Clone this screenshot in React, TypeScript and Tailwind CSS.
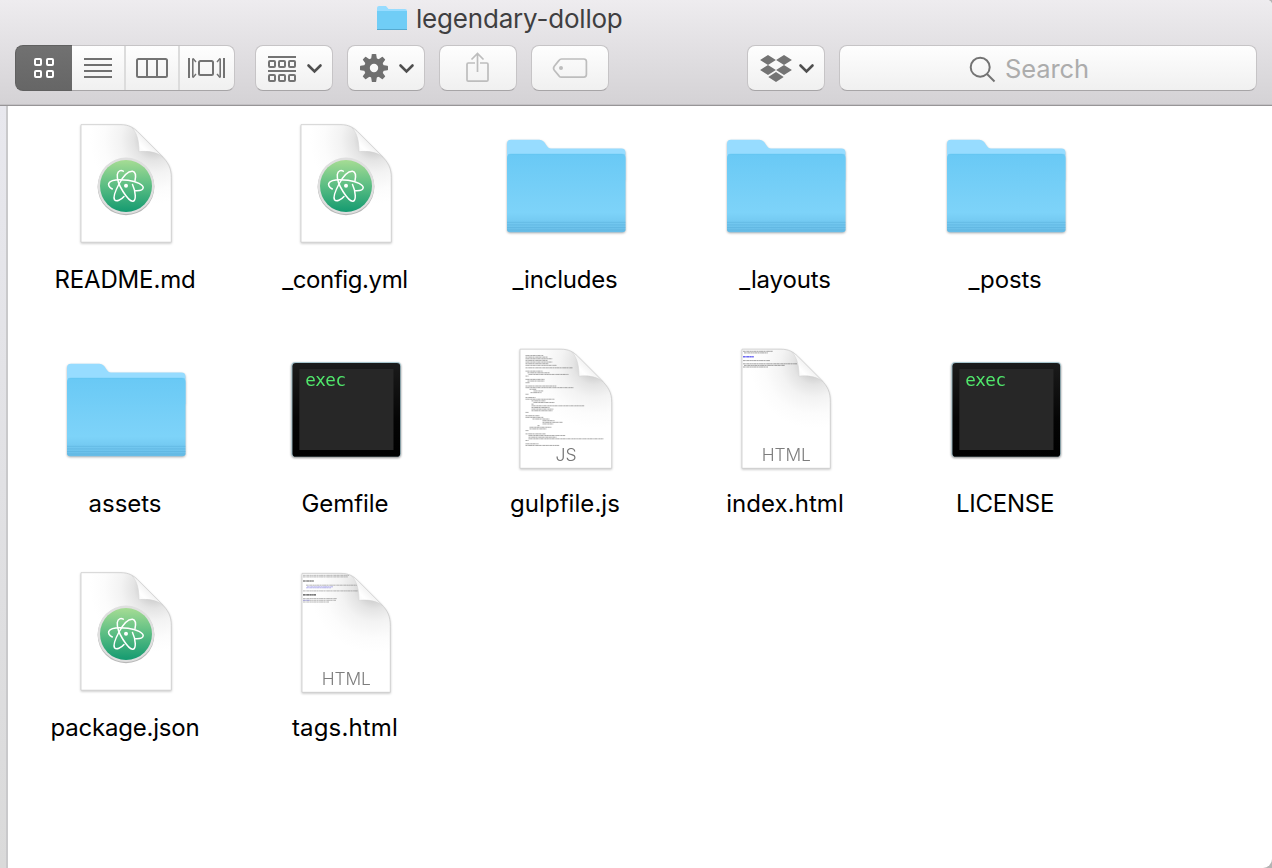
import React, { useId } from "react";

type Kind = "atom" | "folder" | "exec" | "js" | "html" | "tags";

interface FileItem {
  name: string;
  kind: Kind;
  label: string;
}

const files: FileItem[] = [
  { name: "README.md", kind: "atom", label: "tracking-[-0.15px]" },
  { name: "_config.yml", kind: "atom", label: "tracking-[-0.4px]" },
  { name: "_includes", kind: "folder", label: "tracking-[-0.2px]" },
  { name: "_layouts", kind: "folder", label: "tracking-[-0.15px]" },
  { name: "_posts", kind: "folder", label: "tracking-[-0.1px]" },
  { name: "assets", kind: "folder", label: "tracking-[-0.05px]" },
  { name: "Gemfile", kind: "exec", label: "tracking-[-0.05px]" },
  { name: "gulpfile.js", kind: "js", label: "tracking-[0.05px]" },
  { name: "index.html", kind: "html", label: "tracking-[0.05px]" },
  { name: "LICENSE", kind: "exec", label: "tracking-[-0.25px]" },
  { name: "package.json", kind: "atom", label: "tracking-[-0.2px]" },
  { name: "tags.html", kind: "tags", label: "tracking-[0.15px]" },
];

function FolderIcon() {
  const id = useId();
  return (
    <svg width="128" height="128" viewBox="0 0 128 128" className="drop-shadow-[0_1px_1px_rgba(0,0,0,0.3)]">
      <defs>
        <linearGradient id={id} x1="0" y1="0" x2="0" y2="1">
          <stop offset="0" stopColor="#69c9f5" />
          <stop offset="0.6" stopColor="#7ad1f8" />
          <stop offset="0.75" stopColor="#7dd3f9" />
          <stop offset="0.87" stopColor="#73c9f1" />
          <stop offset="1" stopColor="#68bce6" />
        </linearGradient>
      </defs>
      <path d="M6 40V23.8Q6 19.8 10 19.8H37C41 19.8 42.5 20.8 44.5 24C46.5 27 47.5 28.6 51 28.6H120.5Q124.5 28.6 124.5 32.8V60H6Z" fill="#97dcff" />
      <path d="M6 38Q6 34 10 34H120.5Q124.5 34 124.5 38V109.3Q124.5 112.3 121.5 112.3H9Q6 112.3 6 109.3Z" fill={`url(#${id})`} />
      <path d="M7 34.8Q8 34.2 10 34.2H120.7Q123 34.2 124 35" stroke="#5fc0ec" strokeWidth="0.5" fill="none" />
      <path d="M6 102.3H124.5M6 104.9H124.5M6 107.5H124.5M6 110H124.5" stroke="#58aeda" strokeWidth="0.8" opacity="0.65" />
    </svg>
  );
}

function ExecIcon() {
  const id = useId();
  return (
    <svg width="128" height="128" viewBox="0 0 128 128" className="drop-shadow-[0_1px_1px_rgba(0,0,0,0.45)]">
      <defs>
        <linearGradient id={id} x1="0" y1="0" x2="0" y2="1">
          <stop offset="0" stopColor="#1b1b1b" />
          <stop offset="0.6" stopColor="#050505" />
          <stop offset="1" stopColor="#000" />
        </linearGradient>
      </defs>
      <rect x="10.4" y="18" width="109.6" height="95" rx="4" fill="#a8c6cf" />
      <rect x="11.4" y="19" width="107.8" height="93.8" rx="3.4" fill={`url(#${id})`} />
      <rect x="18.3" y="25" width="94.2" height="81" fill="#272727" />
      <text x="24.2" y="42.2" fontSize="17.6" letterSpacing="-0.5" fill="#50e66b" style={{ fontFamily: '"DejaVu Sans Mono", monospace' }}>
        exec
      </text>
    </svg>
  );
}

function Page({ left, right, top, bottom, children }: { left: number; right: number; top: number; bottom: number; children?: React.ReactNode }) {
  const id = useId();
  const t = top;
  const outline = `M${left} ${t}H60C68 ${t} 72.5 ${t + 3} 76.5 ${t + 7}L100 ${t + 30.5}C107 ${t + 37.5} ${right} ${t + 43} ${right} ${t + 53}V${bottom}H${left}Z`;
  return (
    <svg width="128" height="128" viewBox="0 0 128 128" className="drop-shadow-[0_1px_1px_rgba(0,0,0,0.22)]">
      <defs>
        <clipPath id={`${id}c`}>
          <path d={outline} />
        </clipPath>
        <radialGradient id={`${id}s`} gradientUnits="userSpaceOnUse" cx="93" cy={t + 15} r="64">
          <stop offset="0.2" stopColor="#d2d2d2" />
          <stop offset="0.32" stopColor="#e4e4e4" />
          <stop offset="0.52" stopColor="#f3f3f3" />
          <stop offset="0.78" stopColor="#fcfcfc" />
          <stop offset="1" stopColor="#fff" />
        </radialGradient>
        <linearGradient id={`${id}f`} gradientUnits="userSpaceOnUse" x1="89" y1={t + 18} x2="77" y2={t + 30}>
          <stop offset="0" stopColor="#f1f1f1" />
          <stop offset="0.5" stopColor="#fff" />
          <stop offset="1" stopColor="#f6f6f6" />
        </linearGradient>
      </defs>
      <path d={outline} fill={`url(#${id}s)`} />
      <g clipPath={`url(#${id}c)`}>{children}</g>
      <path d={outline} fill="none" stroke="#cbcbcb" strokeWidth="0.8" />
      <path
        d={`M71 ${t + 3}C76.5 ${t + 9} 78 ${t + 17} 78 ${t + 27}C87 ${t + 26} 95 ${t + 27} 102 ${t + 32.5}L76.5 ${t + 7}Q74 ${t + 4.5} 71 ${t + 3}Z`}
        fill={`url(#${id}f)`}
        stroke="#d0d0d0"
        strokeWidth="0.5"
      />
    </svg>
  );
}

function AtomIcon() {
  const id = useId();
  return (
    <Page left={20} right={110.3} top={4.7} bottom={122.2}>
      <defs>
        <linearGradient id={id} x1="0" y1="0" x2="0" y2="1">
          <stop offset="0" stopColor="#a6dc94" />
          <stop offset="0.5" stopColor="#5abd83" />
          <stop offset="1" stopColor="#149a70" />
        </linearGradient>
      </defs>
      <circle cx="65" cy="66.8" r="28.4" fill="#b8b8b8" />
      <circle cx="65" cy="65.8" r="28.3" fill="#dfdfdf" />
      <circle cx="65" cy="66" r="26" fill={`url(#${id})`} />
      <g fill="none" stroke="#fff" strokeWidth="1.5" strokeLinecap="round">
        <path d="M62.3 51.2C60 50 57 50.3 56.3 54.5C55.8 60 58.5 66 62 71.5C65.5 77 69.5 81.5 72 81.2C75.2 80.5 75 72 71.5 64.5" />
        <path d="M74 60.5C75 56 74.5 52 71.5 51.3C67 51 62 56.5 58 64C54.5 70.5 52 77 53.5 79.8C55.5 82 60 80 63 76.5" />
        <path d="M51.3 69C48.5 67.5 47 65.5 47.8 63.3C49.5 60 58 59.2 67 60.2C76 61.5 82.3 64.8 82.2 67.8C82 70 79 70.9 74.5 70.7" />
      </g>
      <circle cx="65" cy="65.8" r="2" fill="#fff" />
    </Page>
  );
}

// Each entry is [indent, length, gap before the line]
const codeLines: number[][] = [
  [0, 18, 0], [0, 22, 0], [0, 27, 0], [0, 22, 0], [0, 27, 0], [0, 23, 0], [0, 31, 0],
  [0, 47, 1], [0, 17, 2], [2, 22, 0], [3, 40, 0], [0, 3, 0], [0, 19, 2], [2, 17, 0],
  [0, 4, 0], [0, 31, 2], [0, 48, 0], [4, 7, 0], [8, 10, 0], [5, 11, 0], [0, 3, 0],
  [0, 10, 2], [0, 29, 0], [6, 14, 0], [8, 21, 0], [6, 2, 0], [6, 53, 0], [6, 18, 0],
  [6, 22, 0], [6, 21, 0], [0, 3, 0], [0, 14, 2], [0, 18, 0], [7, 17, 0], [17, 12, 0],
  [17, 20, 0], [17, 11, 0], [12, 2, 0], [4, 22, 0], [4, 17, 0], [0, 3, 0], [0, 20, 2],
  [3, 37, 0], [3, 28, 0], [3, 75, 0], [0, 3, 0], [0, 13, 2], [0, 34, 0],
];

function JsIcon() {
  let y = 9.8;
  return (
    <Page left={19} right={110.7} top={5.2} bottom={124.3}>
      <g stroke="#555" strokeWidth="0.8" opacity="0.62">
        {codeLines.map(([indent, length, gap], i) => {
          y += 1.65 + gap * 0.83;
          return <path key={i} d={`M${24.5 + indent} ${y}h${length}`} strokeDasharray={i % 2 ? "2 0.3 1 0.2 3 0.3" : "1.4 0.2 2.5 0.3 0.8 0.2"} />;
        })}
      </g>
      <text x="65" y="116.8" textAnchor="middle" fontSize="17.6" fill="#757575" className="font-['Inter',sans-serif] font-light">
        JS
      </text>
    </Page>
  );
}

function HtmlIcon({ tags }: { tags?: boolean }) {
  return (
    <Page left={21} right={109.3} top={tags ? 5.4 : 5.2} bottom={124.3}>
      {tags ? (
        <g stroke="#555" strokeWidth="0.7" opacity="0.75" strokeDasharray="2 0.3 1 0.2 3 0.3">
          <path d="M22 7.3h46M22 8.9h45M25 17.2h51M22 22.9h55M22 30.6h34M22 32.3h33M22 34h26" opacity="0.8" />
          <path d="M22 13h11M22 26.8h13" stroke="#111" strokeWidth="1.2" />
          <path d="M26 18.8h26M25 19.8h25M22 32.3h7" stroke="#7772dc" />
        </g>
      ) : (
        <g stroke="#555" strokeWidth="0.7" opacity="0.75" strokeDasharray="2 0.3 1 0.2 3 0.3">
          <path d="M22 7.3h30M23 8.9h24M22 16.6h27M22 19.8h54M23 21.4h41M22 23h25" />
          <path d="M22 12.8h11" stroke="#3d38ee" strokeWidth="1.4" />
        </g>
      )}
      <text x="65.3" y="116.8" textAnchor="middle" fontSize="17.4" letterSpacing="-0.1" fill="#7d7d7d" className="font-['Inter',sans-serif] font-light">
        HTML
      </text>
    </Page>
  );
}

function FileIcon({ kind }: { kind: Kind }) {
  switch (kind) {
    case "atom":
      return <AtomIcon />;
    case "folder":
      return <FolderIcon />;
    case "exec":
      return <ExecIcon />;
    case "js":
      return <JsIcon />;
    case "html":
      return <HtmlIcon />;
    case "tags":
      return <HtmlIcon tags />;
  }
}

function ToolButton({ label, children }: { label: string; children: React.ReactNode }) {
  return (
    <button aria-label={label} className="h-[46px] w-[78px] shrink-0 rounded-[8px] border border-[#c6c4c6] border-b-[#a7a5a7] bg-linear-to-b from-[#fefefe] to-[#f0f0f0]">
      <svg width="76" height="44" viewBox="1 1 76 44" fill="none">
        {children}
      </svg>
    </button>
  );
}

function Toolbar() {
  return (
    <div className="flex h-[46px] pl-[15px]">
      <div className="mr-5 flex h-[46px] w-[220px] shrink-0">
        <button aria-label="Icons" className="h-[46px] w-[57px] shrink-0 rounded-l-[8px] border-y border-l border-[#606060] bg-linear-to-b from-[#717171] to-[#666]">
          <svg width="56" height="44" viewBox="1 1 56 44" fill="none" stroke="#fff" strokeWidth="2">
            <rect x="20" y="14" width="6" height="6" rx="1" />
            <rect x="32" y="14" width="6" height="6" rx="1" />
            <rect x="20" y="26" width="6" height="6" rx="1" />
            <rect x="32" y="26" width="6" height="6" rx="1" />
          </svg>
        </button>
        <div className="flex w-[163px] overflow-hidden rounded-r-[8px] border-y border-r border-[#c6c4c6] border-b-[#a7a5a7] bg-linear-to-b from-[#fefefe] to-[#f0f0f0]">
          <button aria-label="List" className="-mt-px w-[54px] shrink-0 border-r-2 border-[#dcdcdc]">
            <svg width="52" height="46">
              <path d="M12 14h28M12 20h28M12 26h28M12 32h28" stroke="#707070" strokeWidth="2" />
            </svg>
          </button>
          <button aria-label="Columns" className="-mt-px w-[54px] shrink-0 border-r-2 border-[#dcdcdc]">
            <svg width="52" height="46" fill="none" stroke="#737373" strokeWidth="2">
              <rect x="11" y="14" width="30" height="18" rx="1.5" />
              <path d="M21 14v18M31 14v18" />
            </svg>
          </button>
          <button aria-label="Cover Flow" className="-mt-px w-[54px] shrink-0">
            <svg width="54" height="46" fill="none" stroke="#737373" strokeWidth="2">
              <path d="M9 13v20M44 13v20" />
              <path d="M12.8 13.5v19M40.2 13.5v19" strokeWidth="1.6" />
              <path d="M13 13.5l3 3.5M13 32.5l3-3.5M40 13.5l-3 3.5M40 32.5l-3-3.5" strokeWidth="1.4" />
              <rect x="19" y="16" width="14" height="14" rx="1.5" />
            </svg>
          </button>
        </div>
      </div>
      <div className="flex gap-[14px]">
        <ToolButton label="Arrange">
          <g stroke="#737373" strokeWidth="2">
            <path d="M13 12h28M13 26h28" />
            <rect x="14" y="16" width="6" height="6" rx="1" />
            <rect x="24" y="16" width="6" height="6" rx="1" />
            <rect x="34" y="16" width="6" height="6" rx="1" />
            <rect x="14" y="30" width="6" height="6" rx="1" />
            <rect x="24" y="30" width="6" height="6" rx="1" />
            <rect x="34" y="30" width="6" height="6" rx="1" />
          </g>
          <path d="M53.5 20.5l6 6 6-6" stroke="#4f4f4f" strokeWidth="2.6" strokeLinecap="round" />
        </ToolButton>
        <ToolButton label="Action">
          <g fill="#6f6f6f">
            <path fillRule="evenodd" d="M27 13a10 10 0 1 0 0 20a10 10 0 1 0 0-20zM27 18.8a4.2 4.2 0 1 1 0 8.4a4.2 4.2 0 1 1 0-8.4z" />
            {[0, 45, 90, 135, 180, 225, 270, 315].map((angle) => (
              <path key={angle} d="M24 14.5L24.8 9.6Q24.9 9 25.5 9H28.5Q29.1 9 29.2 9.6L30 14.5Z" transform={`rotate(${angle} 27 23)`} />
            ))}
          </g>
          <path d="M53.5 20.5l6 6 6-6" stroke="#4f4f4f" strokeWidth="2.6" strokeLinecap="round" />
        </ToolButton>
        <ToolButton label="Share">
          <g stroke="#bdbdbd" strokeWidth="1.7">
            <path d="M36 18h-6.7q-1.3 0-1.3 1.3v15.6q0 1.3 1.3 1.3h18.4q1.3 0 1.3-1.3v-15.6q0-1.3-1.3-1.3h-6.7" />
            <path d="M38.5 27V8.5M32.5 14.5l6-6 6 6" />
          </g>
        </ToolButton>
        <ToolButton label="Tags">
          <path d="M30.5 14H52.8Q55.4 14 55.4 16.6V29.6Q55.4 32.2 52.8 32.2H30.5Q29 32.2 28 30.9L23.3 25.2Q21.8 23.2 23.3 21.2L28 15.4Q29 14 30.5 14Z" stroke="#bdbdbd" strokeWidth="1.7" />
          <circle cx="30" cy="23.1" r="2" fill="#bdbdbd" />
        </ToolButton>
      </div>
      <div className="ml-[138px] flex gap-[14px]">
        <ToolButton label="Dropbox">
          <path
            d="M21 10l7.9 5-7.9 5-7.9-5zM37 10l7.9 5-7.9 5-7.9-5zM21 20l7.9 5-7.9 5-7.9-5zM37 20l7.9 5-7.9 5-7.9-5zM29 27l7.7 5-7.7 5-7.7-5z"
            fill="#737373"
          />
          <path d="M53.5 20.5l6 6 6-6" stroke="#4f4f4f" strokeWidth="2.6" strokeLinecap="round" />
        </ToolButton>
        <div className="flex h-[46px] w-[418px] items-center rounded-[8px] border border-[#c6c4c6] border-b-[#a7a5a7] bg-linear-to-b from-[#fefefe] to-[#f0f0f0] pl-[129px]">
          <svg width="28" height="28" fill="none" stroke="#737373" strokeWidth="2" className="mt-px">
            <circle cx="11.2" cy="12.2" r="9.5" />
            <path d="M18 19l7.5 7.5" />
          </svg>
          <span className="ml-2 mt-0.5 text-[25.5px] leading-[30px] tracking-[-0.1px] text-[#acacac]">Search</span>
        </div>
      </div>
    </div>
  );
}

export default function App() {
  return (
    <div className="h-[868px] w-[1272px] bg-[#b4b4b4]">
      <div className="flex h-[868px] w-[1272px] flex-col overflow-hidden rounded-br-[9px] rounded-tr-[5px] bg-white font-['Inter',sans-serif]">
        <header className="h-[106px] shrink-0 border-b border-[#979597] bg-linear-to-b from-[#eeecef] to-[#d4d2d5] shadow-[inset_0_-1px_0_#c3c1c4]">
          <div className="flex h-[45px] items-start pl-[376px]">
            <svg width="32" height="30" viewBox="0 0 32 30" className="mt-1 shrink-0">
              <path d="M1 25V4q0-2 2-2h7l2.5 3H29q2 0 2 2v18z" fill="#97dcff" />
              <path d="M1 7h30v17q0 2-2 2H3q-2 0-2-2z" fill="#70cdf6" />
              <path d="M1 25.5h30" stroke="#56a9cf" />
            </svg>
            <h1 className="ml-2 mt-[2.5px] text-[26px] leading-[32px] tracking-[-0.2px] text-[#3f3f41]">legendary-dollop</h1>
          </div>
          <Toolbar />
        </header>
        <div className="flex min-h-0 flex-1">
          <aside className="w-2 shrink-0 border-r-2 border-[#c9c9cb] bg-linear-to-b from-[#e8e8ee] to-[#dadada]" />
          <main className="grid flex-1 auto-rows-[224px] grid-cols-[repeat(5,220px)] content-start pl-[7px] pt-[14px]">
            {files.map((file) => (
              <div key={file.name} className="flex flex-col items-center">
                <FileIcon kind={file.kind} />
                <span className={`mt-4 text-[24px] leading-[32px] text-black ${file.label}`}>{file.name}</span>
              </div>
            ))}
          </main>
        </div>
      </div>
    </div>
  );
}
